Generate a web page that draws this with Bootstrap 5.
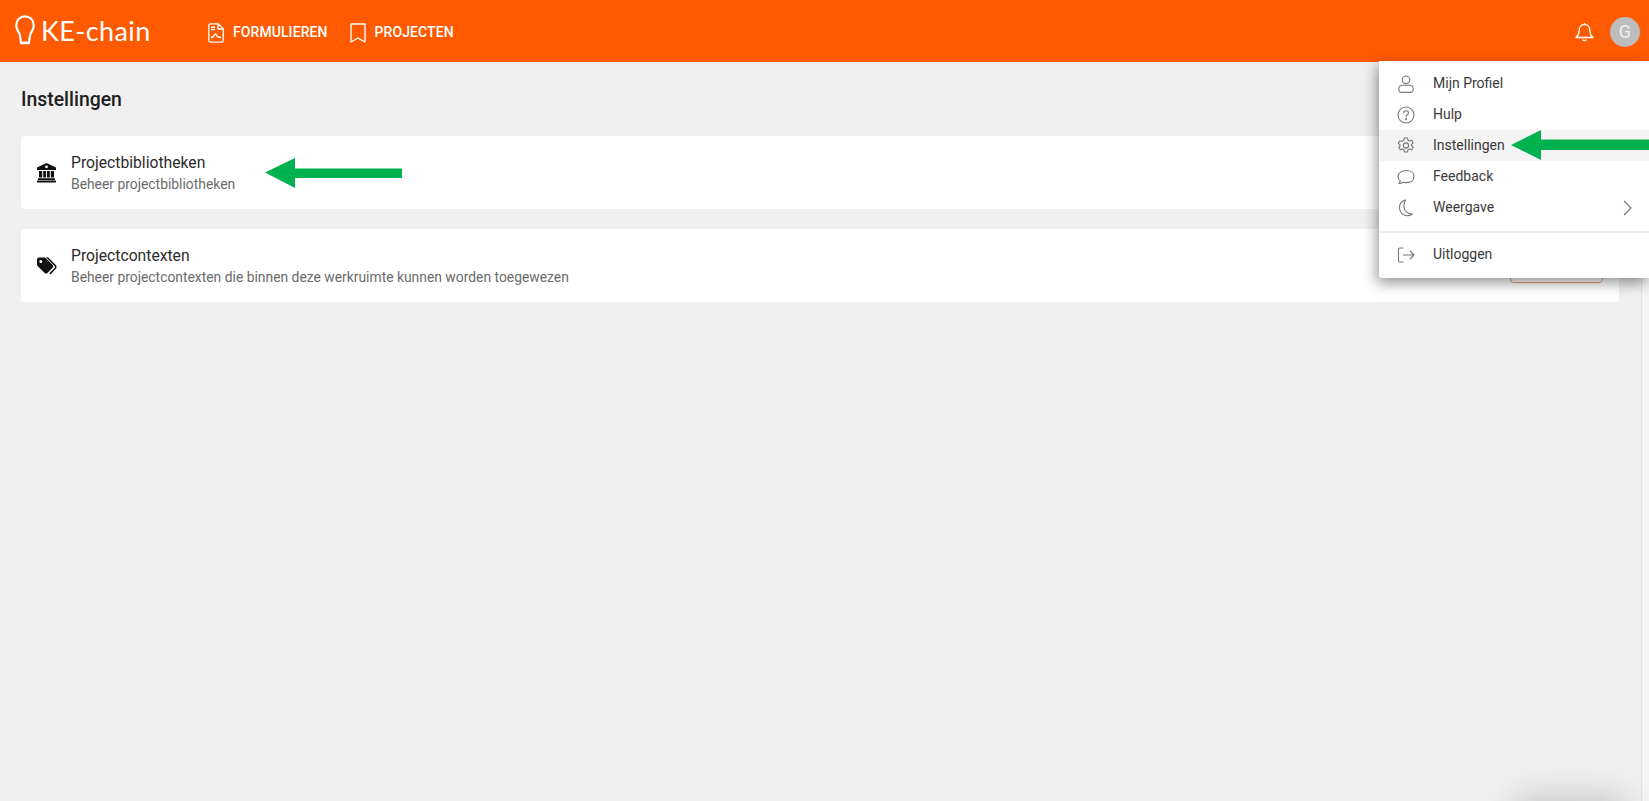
<!DOCTYPE html>
<html lang="nl">
<head>
<meta charset="utf-8">
<title>KE-chain</title>
<link href="https://cdn.jsdelivr.net/npm/bootstrap@5.3.0/dist/css/bootstrap.min.css" rel="stylesheet">
<style>
html,body{height:100%;overflow:hidden}
body{font-family:Roboto,"Liberation Sans",sans-serif;background:#f0f0f0;color:#212121;position:relative}
.ke-bar{background:#ff5a00;height:62px;padding:0 0 0 15px;flex-wrap:nowrap}
.ke-logo{gap:6px;color:#fff;text-decoration:none;width:193px;margin-top:-2px}
.ke-logo span{font-family:Lato,sans-serif;font-size:27px;font-weight:400;letter-spacing:.4px;line-height:1}
.ke-top{color:#fff;font-size:14px;font-weight:500;letter-spacing:.08px;text-transform:uppercase;text-decoration:none;gap:9px;margin-right:22px;margin-top:3px}
.ke-top svg,.ke-bell{color:#fff}
.ke-bell{margin-top:2px}
.ke-avatar{width:30px;height:30px;border-radius:50%;background:#bdbdbd;color:#efefef;font-size:18px;line-height:30px;text-align:center;margin:1px 9px 0 16px}
.ke-shell{height:739px}
.ke-main{padding:24px 22px 0 21px}
.ke-title{font-size:19.4px;font-weight:500;line-height:28px;margin:0 0 22px;color:#212121}
.ke-card{border:0;border-radius:4px;height:73px;margin-bottom:20px;padding:0 16px 0 15px;flex-direction:row;align-items:center}
.ke-ic{width:21px;height:21px;margin-right:14px;color:#111;flex:none}
.ke-name{font-size:15.7px;line-height:20px;color:#2b2b2b;margin-top:1px}
.ke-desc{font-size:13.86px;line-height:20px;color:#6b6b6b;margin-top:1px}
.ke-action{width:93px;height:34px;border:1px solid #e49a78;border-radius:4px;background:transparent;padding:0}
.ke-track{width:8px;background:#f4f4f4;border-left:1px solid #e2e2e2}
.ke-menu{display:block;position:absolute;left:1379px;top:61px;width:270px;height:217px;border:0;border-radius:0 0 0 3px;padding:7px 0 0;margin:0;box-shadow:-2px 5px 14px rgba(0,0,0,.42);z-index:5}
.ke-menu .dropdown-item{display:flex;align-items:center;height:31px;padding:0 14px 0 18px;font-size:14px;color:#3a3a3a}
.ke-menu .dropdown-item svg{width:18px;height:18px;margin-right:18px;color:#777;flex:none}
.ke-menu .dropdown-item.ke-on{background:#f4f4f4}
.ke-menu .dropdown-divider{margin:8px 0 6px;border-top:2px solid #eee;opacity:1}
.ke-chev{margin:0 0 0 auto!important;width:14px!important;height:16px!important}
.ke-arrow{position:absolute;z-index:6}
.ke-glow{position:absolute;left:1520px;top:806px;width:100px;height:30px;border-radius:15px;box-shadow:0 0 32px 12px rgba(0,0,0,.16)}
</style>
</head>
<body>
<nav class="navbar ke-bar d-flex align-items-center justify-content-start">
  <a class="ke-logo d-flex align-items-center" href="#">
    <svg width="20" height="30" viewBox="0 0 20 30" fill="none" stroke="currentColor" stroke-width="2.2" stroke-linejoin="round" stroke-linecap="round"><path d="M6 27.500h8c.6-3 .6-6 1.600-9C17 16 18.800 13.800 18.800 10.500 18.800 5 14.800 1.300 10 1.300S1.200 5 1.200 10.500c0 3.300 1.800 5.500 3.200 8 1 3 1 6 1.600 9z"/><path d="M6 28.200h8"/></svg>
    <span>KE-chain</span>
  </a>
  <a class="ke-top d-flex align-items-center" href="#">
    <svg width="16" height="20" viewBox="0 0 16 20" fill="none" stroke="currentColor" stroke-width="1.300" stroke-linejoin="round"><path d="M2.500.8h7.700l5 5v11.400a2 2 0 0 1-2 2H2.800a2 2 0 0 1-2-2V2.500A1.700 1.700 0 0 1 2.500.8z"/><path d="M10 1v5h5"/><path d="M3 4.200h4M3 6.500h4" stroke-width="1.500"/><path d="M2.800 14.500c2 0 2.600-.6 3.700-2.800.5-1 1-.9 1.500 0 1 2 2.300 2.900 5 2.800" stroke-width="1.400"/></svg>
    <span>Formulieren</span>
  </a>
  <a class="ke-top d-flex align-items-center" href="#">
    <svg width="16" height="20" viewBox="0 0 16 20" fill="none" stroke="currentColor" stroke-width="1.300" stroke-linejoin="round"><path d="M1 1h14v18l-7-4-7 4z"/></svg>
    <span>Projecten</span>
  </a>
  <div class="ms-auto d-flex align-items-center">
    <svg class="ke-bell" width="19" height="20" viewBox="0 0 19 20" fill="none" stroke="currentColor" stroke-width="1.300" stroke-linejoin="round"><path d="M9.500 2.500c-3.300 0-5.300 2.500-5.300 5.700 0 3.800-1 5.300-3.200 7.300h17c-2.200-2-3.200-3.500-3.200-7.300 0-3.200-2-5.700-5.300-5.700z"/><path d="M9.500 2.500V1"/><path d="M7.700 17.500c.4 1.600 3.200 1.600 3.600 0"/></svg>
    <div class="ke-avatar">G</div>
  </div>
</nav>

<div class="ke-shell d-flex">
  <main class="ke-main flex-grow-1">
    <h1 class="ke-title">Instellingen</h1>
    <div class="card ke-card">
      <svg class="ke-ic" viewBox="0 0 21 21" fill="currentColor"><path d="M10.500 1 1 5.500V8h19V5.500zM10.500 3.400a1.400 1.400 0 1 1 0 2.800 1.400 1.400 0 0 1 0-2.800z" fill-rule="evenodd"/><path d="M3 9h3.200v6.500H3zM7.200 9h2.800v6.500H7.200zM11 9h2.800v6.500H11zM14.800 9H18v6.500h-3.200zM2 16.300h17V18H2zM1 18.600h19v2H1z"/></svg>
      <div class="flex-grow-1">
        <div class="ke-name">Projectbibliotheken</div>
        <div class="ke-desc">Beheer projectbibliotheken</div>
      </div>
      <button class="btn ke-action" type="button" aria-label="Beheren"></button>
    </div>
    <div class="card ke-card">
      <svg class="ke-ic" viewBox="0 0 21 21" fill="currentColor"><path d="M1 3.500v6.100c0 .6.200 1.100.6 1.500l7 6.900c.8.800 2 .8 2.800 0l5.300-5.300c.8-.8.800-2 0-2.800l-7-6.900c-.4-.4-.9-.6-1.500-.6H3c-1.100 0-2 .9-2 2.100zM4.800 5a1.500 1.500 0 1 1 0 3 1.500 1.500 0 0 1 0-3z" fill-rule="evenodd"/><path d="M12 2.300l7.800 7.800c1 1 1 2.700 0 3.700l-5.300 5.600-1.200-1.200 5.300-5.300c.6-.6.600-1.400 0-2L10 2.300z"/></svg>
      <div class="flex-grow-1">
        <div class="ke-name">Projectcontexten</div>
        <div class="ke-desc">Beheer projectcontexten die binnen deze werkruimte kunnen worden toegewezen</div>
      </div>
      <button class="btn ke-action" type="button" aria-label="Beheren"></button>
    </div>
  </main>
  <div class="ke-track"></div>
</div>

<div class="dropdown-menu ke-menu">
  <a class="dropdown-item" href="#"><svg viewBox="0 0 18 18" fill="none" stroke="currentColor" stroke-width="1.100"><circle cx="9" cy="4.800" r="3.800"/><path d="M1.800 14c0-2.500 2-3.700 4-3.700h6.400c2 0 4 1.200 4 3.700 0 2-1 3.400-2.600 3.400H4.400c-1.600 0-2.600-1.400-2.600-3.400z"/></svg>Mijn Profiel</a>
  <a class="dropdown-item" href="#"><svg viewBox="0 0 18 18" fill="none" stroke="currentColor" stroke-width="1.100"><circle cx="9" cy="9" r="8"/><path d="M6.700 7c0-3 4.800-3 4.800 0 0 1.800-2.400 1.800-2.400 3.700" stroke-linecap="round"/><circle cx="9.100" cy="13" r=".5"/></svg>Hulp</a>
  <a class="dropdown-item ke-on" href="#"><svg viewBox="0 0 18 18" fill="none" stroke="currentColor" stroke-width="1.100" stroke-linejoin="round"><path d="M7.500 1h3l.5 2.200 1.500.8 2.200-.7 1.500 2.600-1.700 1.600v1l1.700 1.600-1.500 2.600-2.200-.7-1.500.9-.5 2.100h-3l-.5-2.100-1.500-.9-2.200.7-1.500-2.600L3 8.900v-1L1.300 6.300l1.500-2.600 2.200.7 1.500-.9z"/><circle cx="9" cy="8.500" r="2.600"/></svg>Instellingen</a>
  <a class="dropdown-item" href="#"><svg viewBox="0 0 18 18" fill="none" stroke="currentColor" stroke-width="1.100" stroke-linejoin="round"><path d="M9.500 2.500C4.800 2.500 1 4.800 1 8.500c0 1.900.9 3.200 2.200 4.100.1 1.100-.4 2.100-1.200 2.900 1.600 0 3-.5 4-1.300 1 .3 2.300.4 3.500.4 4.400 0 7.500-2.300 7.500-6.100S13.900 2.500 9.500 2.500z"/></svg>Feedback</a>
  <a class="dropdown-item" href="#"><svg viewBox="0 0 18 18" fill="none" stroke="currentColor" stroke-width="1.100" stroke-linejoin="round"><path d="M8.500 1C4.700 1.800 2.500 5 2.500 8.800c0 4.700 3.700 8 8 8 2 0 3.700-.7 5-1.800-4.600.2-8.300-2.700-8.600-7.200C6.700 5.200 7.400 2.900 8.500 1z"/></svg>Weergave<svg class="ke-chev" viewBox="0 0 14 16" fill="none" stroke="currentColor" stroke-width="1.100"><path d="M3 1l7 7-7 7"/></svg></a>
  <hr class="dropdown-divider">
  <a class="dropdown-item" href="#"><svg viewBox="0 0 18 18" fill="none" stroke="currentColor" stroke-width="1.100" stroke-linejoin="round"><path d="M6.500 2H3a1.500 1.500 0 0 0-1.500 1.500v11A1.500 1.500 0 0 0 3 16h3.500"/><path d="M6 9h11M13 5l4 4-4 4"/></svg>Uitloggen</a>
</div>

<svg class="ke-arrow" style="left:264px;top:157px" width="139" height="32" viewBox="0 0 139 32"><path fill="#00b14f" d="M1 15.500 31 1v10.500h107v9.500H31v10z"/></svg>
<svg class="ke-arrow" style="left:1510px;top:129px" width="139" height="33" viewBox="0 0 139 33"><path fill="#00b14f" d="M1 16 31 1v9.500h108V21H31v10z"/></svg>
<div class="ke-glow"></div>
</body>
</html>
